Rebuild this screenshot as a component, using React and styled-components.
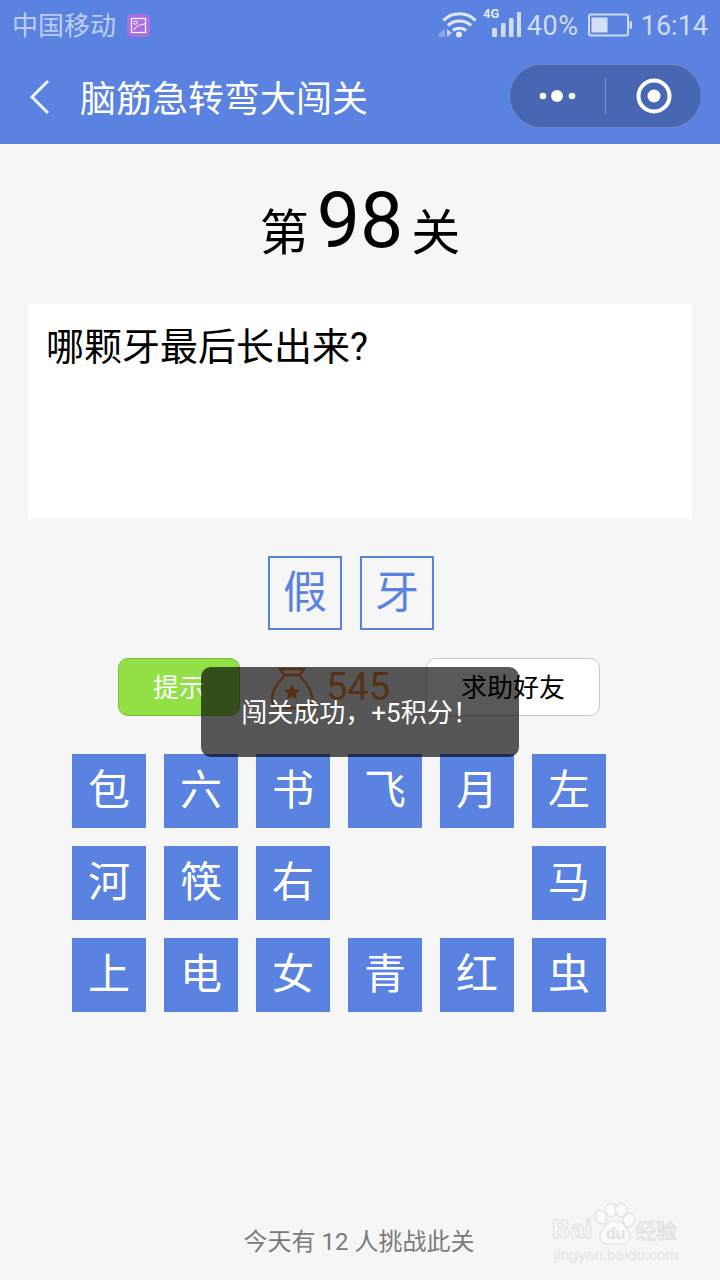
import React from 'react';
import styled, { createGlobalStyle } from 'styled-components';

const Global = createGlobalStyle`
  html, body { margin: 0; padding: 0; background: #f6f6f6; }
  * { box-sizing: border-box; }
  body { font-family: Roboto, "Noto Sans CJK SC", sans-serif; }
`;
const Page = styled.div`
  position: relative; width: 720px; height: 1280px; overflow: hidden;
  background: #f6f6f6; display: flex; flex-direction: column;
`;
const Header = styled.header`background: #5a82e0; height: 144px; display: flex; flex-direction: column; flex: none;`;
const StatusBar = styled.div`
  height: 50px; display: flex; align-items: center; padding: 0 12px;
  justify-content: space-between;
`;
const StatusGroup = styled.div`display: flex; align-items: center;`;
const Carrier = styled.span`color: rgba(255,255,255,.62); font-size: 26px; line-height: 48px; margin: 0 11px 2px 0; font-family: "Noto Sans CJK SC", sans-serif;`;
const StatusText = styled.span`
  color: rgba(255,255,255,.72); font-size: 27px; line-height: 50px; padding-top: 2px;
  letter-spacing: ${p => p.$ls || 0}px; margin-left: ${p => p.$ml || 0}px; margin-right: ${p => p.$mr || 0}px;
`;
const SignalWrap = styled.span`display: flex; margin: 0 6px;`;
const SignalSvg = styled.svg`overflow: visible;`;
const NavBar = styled.div`flex: 1; display: flex; align-items: center; padding: 0 18px 0 28px;`;
const Title = styled.h1`
  margin: 0 0 2px 28px; flex: 1; font-size: 36px; font-weight: 400; color: #fff;
  font-family: "Noto Sans CJK SC", sans-serif; line-height: 48px;
`;
const Capsule = styled.div`
  width: 193px; height: 64px; border-radius: 32px; background: #4867b2; margin-bottom: 2px;
  border: 1px solid rgba(255,255,255,.22); display: flex; align-items: center;
`;
const CapsulePart = styled.div`flex: 1; height: 100%; display: flex; align-items: center; justify-content: center;`;
const CapDivider = styled.div`width: 1px; height: 38px; background: rgba(255,255,255,.3);`;

const Level = styled.div`
  height: 160px; display: flex; justify-content: center; align-items: center; gap: 8px;
  color: #000; flex: none;
`;
const LevelWord = styled.span`font-size: 49px; font-family: "Noto Sans CJK SC", sans-serif; line-height: 60px; margin-top: 9px;`;
const LevelNum = styled.span`font-size: 77px; line-height: 80px; font-family: Roboto, sans-serif; margin-bottom: 7px;`;
const Question = styled.div`
  margin: 0 28px; height: 214px; background: #fff; padding: 18px 18px; flex: none;
  font-size: 38px; line-height: 50px; color: #000; font-family: Roboto, "Noto Sans CJK SC", sans-serif;
`;
const Answers = styled.div`display: flex; justify-content: center; gap: 18px; margin-top: 38px; padding-right: 18px; flex: none;`;
const AnswerBox = styled.div`
  width: 74px; height: 74px; border: 2px solid #5a82e0; color: #5a82e0; font-size: 44px; padding-bottom: 8px;
  display: flex; align-items: center; justify-content: center; font-family: "Noto Sans CJK SC", sans-serif; line-height: 1;
`;
const Tools = styled.div`display: flex; margin: 28px 120px 0 118px; height: 58px; align-items: center; flex: none;`;
const HintButton = styled.div`
  width: 122px; height: 58px; background: #92e045; border: 1px solid #76bf35; border-radius: 10px; padding-bottom: 3px;
  color: #fff; font-size: 26px; display: flex; align-items: center; justify-content: center;
  font-family: "Noto Sans CJK SC", sans-serif;
`;
const Score = styled.div`flex: 1; display: flex; align-items: center; padding-left: 30px; gap: 12px;`;
const ScoreNum = styled.span`font-size: 38px; color: #ff8a3c; line-height: 58px;`;
const HelpButton = styled.div`
  width: 174px; height: 58px; border: 1px solid #c8c8c8; border-radius: 10px; background: #fff; padding-bottom: 3px;
  color: #000; font-size: 26px; display: flex; align-items: center; justify-content: center;
  font-family: "Noto Sans CJK SC", sans-serif;
`;
const Keys = styled.div`
  display: grid; grid-template-columns: repeat(6, 74px); gap: 18px; margin: 38px 0 0 72px; flex: none;
`;
const Key = styled.div`
  width: 74px; height: 74px; background: ${p => p.$empty ? 'transparent' : '#5a82e0'}; color: #fff; padding-bottom: 8px;
  font-size: 42px; display: flex; align-items: center; justify-content: center;
  font-family: "Noto Sans CJK SC", sans-serif; line-height: 1;
`;
const Footer = styled.div`
  position: absolute; bottom: 20px; left: 0; width: 718px; text-align: center; font-size: 24px; color: #7a7a7a;
  line-height: 36px; font-family: Roboto, "Noto Sans CJK SC", sans-serif;
`;
const Toast = styled.div`
  position: absolute; left: 201px; top: 667px; width: 318px; height: 90px; border-radius: 10px;
  background: rgba(0,0,0,.65); color: #fff; font-size: 26px; text-align: center; padding-top: 28px;
  line-height: 36px; font-family: Roboto, "Noto Sans CJK SC", sans-serif;
`;
const Watermark = styled.div`position: absolute; left: 552px; top: 1202px; width: 130px; height: 66px;`;
const WmPaw = styled.svg`position: absolute; left: 0; top: 0;`;
const WmBai = styled.span`position: absolute; left: 0; top: 13px; font: 700 25px "Liberation Sans", sans-serif; letter-spacing: .5px; color: #fbfbfb; -webkit-text-stroke: 1px #dfdfdf;`;
const WmDu = styled.span`position: absolute; left: 54px; top: 23px; font: 700 16px "Liberation Sans", sans-serif; color: #e0e0e0;`;
const WmJing = styled.span`position: absolute; left: 83px; top: 12px; font: 21px "Noto Sans CJK SC", sans-serif; color: #fbfbfb; -webkit-text-stroke: .8px #dcdcdc; white-space: nowrap;`;
const WmUrl = styled.span`position: absolute; left: 2px; top: 44px; font: 15px "Liberation Sans", sans-serif; letter-spacing: .2px; color: #e2e2e2; white-space: nowrap;`;

const keys = ['包','六','书','飞','月','左','河','筷','右','','','马','上','电','女','青','红','虫'];
const toastText = '闯关成功\uFF0C+5积分\uFF01';

const Wifi = () => (
  <svg width="38" height="30" viewBox="0 0 38 30" fill="none" stroke="rgba(255,255,255,.82)" strokeWidth="3.200">
    <path d="M4.500 10.500C13 1.500 28 1.500 36.500 10.500" />
    <path d="M9 15.500C15 9.500 26 9.500 32 15.500" />
    <path d="M14 20.500C17 17.500 24 17.500 27 20.500" />
    <circle cx="20" cy="24.500" r="3" fill="rgba(255,255,255,.85)" stroke="none" />
    <path d="M0 23l6-4v8H0z" fill="rgba(255,255,255,.3)" stroke="none" />
    <path d="M8 19l5 4-5 4z" fill="rgba(255,255,255,.65)" stroke="none" />
  </svg>
);
const Signal = () => (
  <SignalSvg width="38" height="34" viewBox="0 0 38 34">
    <text x="0" y="10" fontSize="13" fontWeight="700" fontFamily="Roboto" fill="rgba(255,255,255,.85)">4G</text>
    <g fill="rgba(255,255,255,.72)">
      <rect x="9" y="20" width="5" height="9" rx="1" /><rect x="18" y="15" width="4.500" height="14" rx="1" />
      <rect x="26" y="10" width="4.500" height="19" rx="1" /><rect x="34" y="4" width="4" height="25" rx="1" />
    </g>
  </SignalSvg>
);
const Battery = () => (
  <svg width="45" height="24" viewBox="0 0 45 24">
    <rect x="2" y="1.500" width="39" height="21" rx="2" fill="none" stroke="rgba(255,255,255,.7)" strokeWidth="2" />
    <rect x="4.500" y="4.500" width="16" height="15" fill="rgba(255,255,255,.75)" />
    <rect x="42.500" y="8" width="2.500" height="8" rx="1" fill="rgba(255,255,255,.7)" />
  </svg>
);
const PicBadge = () => (
  <svg width="23" height="23" viewBox="0 0 23 23">
    <rect width="23" height="23" rx="5" fill="#ab6fe0" />
    <rect x="4.500" y="4.500" width="14" height="14" fill="none" stroke="#fff" strokeWidth="1.200" />
    <circle cx="8.500" cy="8.500" r="1.700" fill="none" stroke="#fff" />
    <path d="M7 16c1-3 4-5 11-6" fill="none" stroke="#fff" />
  </svg>
);
const Back = () => (
  <svg width="24" height="36" viewBox="0 0 24 36" fill="none" stroke="#eef2fc" strokeWidth="3">
    <path d="M20 2L4 18l16 16" />
  </svg>
);
const Dots = () => (
  <svg width="40" height="14" viewBox="0 0 40 14" fill="#fff">
    <circle cx="5" cy="7" r="3.300" /><circle cx="19" cy="7" r="6" /><circle cx="34" cy="7" r="3.300" />
  </svg>
);
const Target = () => (
  <svg width="36" height="36" viewBox="0 0 36 36">
    <circle cx="18" cy="18" r="15.500" fill="none" stroke="#fff" strokeWidth="4" /><circle cx="18" cy="18" r="6.500" fill="#fff" />
  </svg>
);
const MoneyBag = () => (
  <svg width="44" height="48" viewBox="0 0 44 48" fill="none" stroke="#ff8a3c" strokeWidth="2.400">
    <path d="M10 6h24l-4 6H14z" />
    <path d="M15 12C8 20 2 27 2 36c0 6 4 9 9 9h22c5 0 9-3 9-9 0-9-6-16-13-24" />
    <path d="M22 21l2.400 5.300 5.800.6-4.300 3.900 1.200 5.700-5.100-2.900-5.100 2.900 1.200-5.700-4.300-3.900 5.800-.6z" fill="#ff8a3c" stroke="none" />
  </svg>
);
const PawMark = () => (
  <WmPaw width="130" height="50" viewBox="0 0 130 50" fill="#fbfbfb" stroke="#e0e0e0" strokeWidth="1.200">
    <ellipse cx="49" cy="15" rx="5.500" ry="7" transform="rotate(-20 49 15)" />
    <ellipse cx="59" cy="8" rx="5.500" ry="7" />
    <ellipse cx="69" cy="8" rx="5.500" ry="7" />
    <ellipse cx="77" cy="18" rx="5.500" ry="7" transform="rotate(20 77 18)" />
    <path d="M63 19c8 0 11 6 14 11 3 6-1 12-8 12H56c-7 0-10-6-7-12 3-5 6-11 14-11z" />
  </WmPaw>
);

export default function App() {
  return (
    <Page>
      <Global />
      <Header>
        <StatusBar>
          <StatusGroup>
            <Carrier>中国移动</Carrier>
            <PicBadge />
          </StatusGroup>
          <StatusGroup>
            <Wifi />
            <SignalWrap><Signal /></SignalWrap>
            <StatusText $ls={.6} $mr={8}>40%</StatusText>
            <Battery />
            <StatusText $ml={9}>16:14</StatusText>
          </StatusGroup>
        </StatusBar>
        <NavBar>
          <Back />
          <Title>脑筋急转弯大闯关</Title>
          <Capsule>
            <CapsulePart><Dots /></CapsulePart>
            <CapDivider />
            <CapsulePart><Target /></CapsulePart>
          </Capsule>
        </NavBar>
      </Header>
      <Level>
        <LevelWord>第</LevelWord>
        <LevelNum>98</LevelNum>
        <LevelWord>关</LevelWord>
      </Level>
      <Question>哪颗牙最后长出来?</Question>
      <Answers>
        <AnswerBox>假</AnswerBox>
        <AnswerBox>牙</AnswerBox>
      </Answers>
      <Tools>
        <HintButton>提示</HintButton>
        <Score><MoneyBag /><ScoreNum>545</ScoreNum></Score>
        <HelpButton>求助好友</HelpButton>
      </Tools>
      <Keys>
        {keys.map((k, i) => <Key key={i} $empty={!k}>{k}</Key>)}
      </Keys>
      <Footer>今天有 12 人挑战此关</Footer>
      <Toast>{toastText}</Toast>
      <Watermark>
        <PawMark />
        <WmBai>Bai</WmBai>
        <WmDu>du</WmDu>
        <WmJing>经验</WmJing>
        <WmUrl>jingyan.baidu.com</WmUrl>
      </Watermark>
    </Page>
  );
}
